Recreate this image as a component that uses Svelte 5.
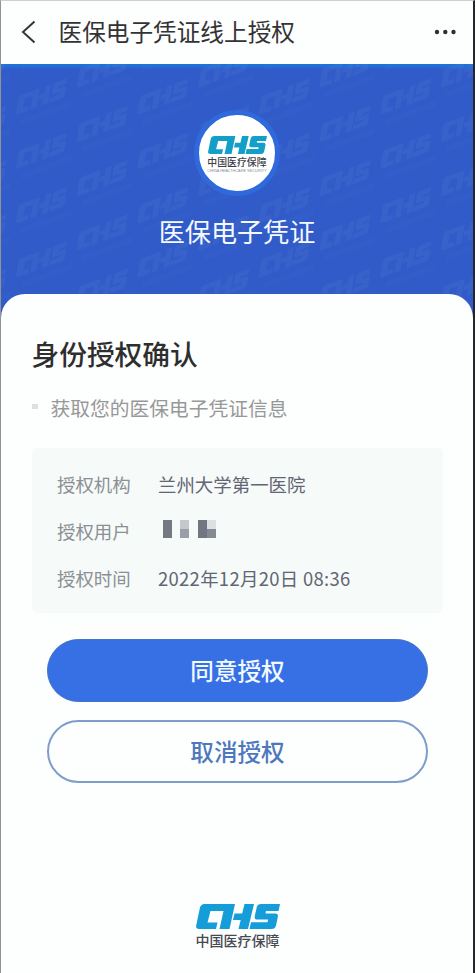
<script>
  const marks = [];
  for (let col = -1; col < 8; col++) {
    for (let row = -1; row < 5; row++) {
      marks.push({ x: 16 + col * 60.7, y: 33 + row * 54.3 - (col % 2 ? 27 : 0) });
    }
  }
  const rows = [
    { label: '授权机构', value: '兰州大学第一医院' },
    { label: '授权用户', masked: true },
    { label: '授权时间', value: '2022年12月20日 08:36', date: true }
  ];
</script>

{#snippet emblem()}
  <path d="M8.500 0H39L33.500 25H23.500L27.500 7H14.500L11.500 18.500H21.500L20 25H3Q-.5 25 .2 21.500L4 3.500Q5 0 8.500 0Z" />
  <path d="M48.500 0H58L52 25H42.500L44.700 16H37L38.500 9.500H46.200Z" />
  <path d="M65 0H84L82.500 7H70L69.500 9.500H79Q82.500 9.500 81.800 13L80 21.500Q79.200 25 75.500 25H53.500L55 18.200H71.500L72.200 15.500H61.500Q58 15.500 58.800 12L60.800 3Q61.600 0 65 0Z" />
{/snippet}

<div class="screen">
  <header>
    <svg class="back" width="16" height="24" viewBox="0 0 16 24"><path d="M13.500 1.500 2 12l11.500 10.500" /></svg>
    <span class="title">医保电子凭证线上授权</span>
    <svg class="more" width="24" height="6" viewBox="0 0 24 6"><circle cx="4" cy="3" r="2.200" /><circle cx="12.300" cy="3" r="2.200" /><circle cx="20.500" cy="3" r="2.200" /></svg>
  </header>

  <section class="hero">
    <svg class="pattern" width="475" height="260" viewBox="0 0 475 260">
      {#each marks as m}
        <g transform="translate({m.x} {m.y}) skewY(-20) scale(.61 .72)">
          {@render emblem()}
          <path d="M9 33H92L90 42H7Z" opacity=".4" />
        </g>
      {/each}
    </svg>
    <div class="badge">
      <svg width="59" height="18" viewBox="0 0 84 25" preserveAspectRatio="none">{@render emblem()}</svg>
      <span class="org">中国医疗保障</span>
      <span class="en">CHINA HEALTHCARE SECURITY</span>
    </div>
    <div class="name">医保电子凭证</div>
  </section>

  <main>
    <h1>身份授权确认</h1>
    <p class="scope"><i></i>获取您的医保电子凭证信息</p>
    <dl>
      {#each rows as r}
        <div class="row">
          <dt>{r.label}</dt>
          <dd class:date={r.date}>
            {#if r.masked}
              <svg width="58" height="18" viewBox="0 0 58 18" shape-rendering="crispEdges">
                <path fill="#747982" d="M5 0h9v18H5z" />
                <path fill="#c4c7cb" d="M22 0h9v9h-9z" /><path fill="#9a9ea9" d="M22 9h9v9h-9z" />
                <path fill="#717680" d="M40 0h9v18h-9z" /><path fill="#dddfe2" d="M49 0h9v9h-9z" /><path fill="#858992" d="M49 9h9v9h-9z" />
              </svg>
            {:else}{r.value}{/if}
          </dd>
        </div>
      {/each}
    </dl>
    <button class="primary">同意授权</button>
    <button class="secondary">取消授权</button>
    <footer>
      <svg width="84" height="25" viewBox="0 0 84 25">{@render emblem()}</svg>
      <span>中国医疗保障</span>
    </footer>
  </main>
</div>

<style>
  .screen {
    box-sizing: border-box;
    width: 475px;
    height: 973px;
    display: flex;
    flex-direction: column;
    overflow: hidden;
    background: #fdfefe;
    border-top: 1px solid #cfcfd1;
    border-left: 1px solid #929398;
    border-right: 2px solid #24262b;
    font-family: "Noto Sans CJK SC", sans-serif;
  }
  header {
    box-sizing: border-box;
    flex: none;
    height: 63px;
    display: flex;
    align-items: center;
    padding: 0 16px 2px 20px;
  }
  .back { fill: none; stroke: #363636; stroke-width: 2; }
  .title { flex: 1; margin: -2px 0 0 21.5px; font-size: 23.65px; line-height: 34px; color: #333; }
  .more { fill: #303030; }
  .hero {
    position: relative;
    flex: none;
    height: 260px;
    display: flex;
    flex-direction: column;
    align-items: center;
    background: linear-gradient(#2070d8 0, #2070d8 2px, #305bc8 5px);
  }
  .pattern { position: absolute; left: -1px; top: 0; fill: #7097df; opacity: .12; }
  .badge {
    position: relative;
    box-sizing: border-box;
    width: 86px;
    height: 86px;
    margin-top: 46px;
    border: 5px solid #3069dc;
    border-radius: 50%;
    background: #fff;
    display: flex;
    flex-direction: column;
    align-items: center;
    padding-top: 21px;
  }
  .badge svg { flex: none; fill: #12a0c9; }
  .org { font-size: 9.9px; line-height: 14px; margin-top: 1px; font-weight: 500; color: #3c4048; white-space: nowrap; }
  .en { font: 3.9px/4px "Liberation Sans", sans-serif; color: #8a8d92; white-space: nowrap; }
  .name { position: relative; margin-top: 16px; font-size: 26.1px; line-height: 38px; color: #f4faff; }
  main {
    position: relative;
    flex: 1;
    margin-top: -30px;
    border-radius: 24px 24px 0 0;
    background: #fdfefe;
    display: flex;
    flex-direction: column;
    align-items: stretch;
    padding: 39px 30px 0 31px;
  }
  h1 { margin: 0 0 0 -.5px; font-size: 27.7px; line-height: 40px; font-weight: 500; color: #2e2e2e; }
  .scope { display: flex; align-items: center; margin: 20px 0 0; font-size: 19.75px; line-height: 30px; color: #989898; }
  .scope i { width: 6px; height: 5px; margin: -4px 12.5px 0 0; background: #dedfdf; }
  dl {
    box-sizing: border-box;
    height: 165px;
    margin: 25px 0 0;
    padding: 13px 25px 0;
    border-radius: 5px;
    background: #f6faf9;
  }
  .row { display: flex; align-items: center; height: 46.7px; font-size: 18.45px; }
  dt { width: 101px; color: #8c9095; }
  dd { margin: 0; color: #626573; }
  .date { letter-spacing: .3px; }
  dd svg { display: block; margin-top: -5px; }
  button {
    box-sizing: border-box;
    height: 63px;
    margin: 0 15px;
    padding: 0 0 2px;
    border-radius: 32px;
    font: 500 23.6px/34px "Noto Sans CJK SC", sans-serif;
  }
  .primary { margin-top: 26px; border: 1px solid #4573c6; background: #3770e5; color: #f1faff; }
  .secondary { margin-top: 18px; border: 2px solid #7f9dcb; background: #fdfefe; color: #4d78bd; }
  footer { display: flex; flex-direction: column; align-items: center; margin-top: 121px; font-size: 14px; line-height: 18px; font-weight: 500; color: #454a50; }
  footer svg { fill: #149dd9; margin-bottom: 2px; }
</style>
